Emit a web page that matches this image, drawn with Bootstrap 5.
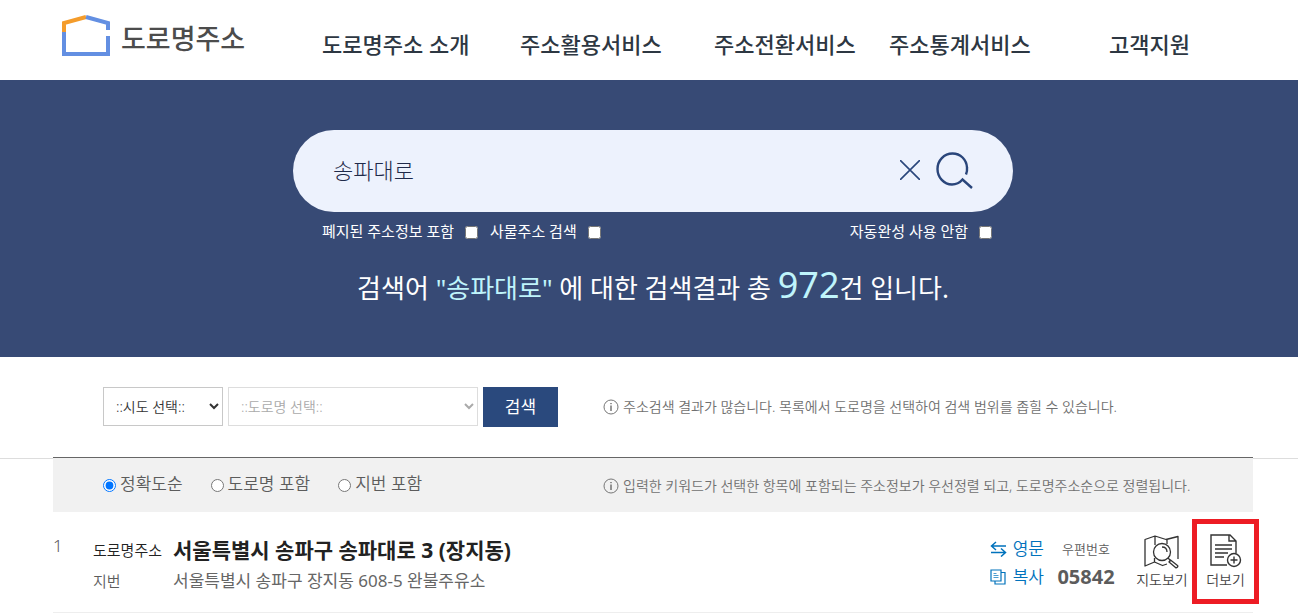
<!DOCTYPE html>
<html lang="ko">
<head>
<meta charset="utf-8">
<meta name="viewport" content="width=device-width, initial-scale=1">
<title>도로명주소</title>
<link rel="stylesheet" href="https://cdn.jsdelivr.net/npm/bootstrap@5.3.0/dist/css/bootstrap.min.css">
<style>
body{font-family:"Noto Sans","Noto Sans CJK KR",sans-serif;color:#5c5c5c;background:#fff;line-height:24px;font-size:17px;font-weight:350}
a{text-decoration:none;color:inherit}
.wrap{padding-left:53px;padding-right:45px}
.site-head{height:80px}
.brand{width:269px;padding-left:9px;color:#4c4c4c;font-size:27px;font-weight:500;gap:11px;padding-bottom:3px}
.brand svg{margin-top:-6px}
.gnb{display:grid;grid-template-columns:198fr 194fr 175fr 220fr 144fr;font-size:22px;font-weight:500;color:#2d3742;padding-top:8px}
.hero{background:#374a75;color:#fff;height:277px;padding-top:50px}
.search-area{width:100%;max-width:720px}
.search-box{background:#edf2fd;height:82px;border-radius:41px;padding:0 40px 2px 38px}
.search-box input{background:none;border:0;outline:0;font-size:22px;color:#1f2a4a;min-width:0;font-weight:300}
.search-box button{background:none;border:0;padding:0;line-height:0}
.checks{font-size:15px;padding:7px 21px 0 29px;font-weight:400}
.checks label{gap:11px}
input[type=checkbox],input[type=radio]{width:13px;height:13px;margin:3px 0 0}
.summary{font-size:26px;line-height:48px;margin:18px 0 0;font-weight:400}
.summary em{font-style:normal;color:#bff4fb}
.summary .total{font-size:36px}
.filter{height:101px;padding-top:30px}
.filter select{height:39px;border:1px solid #c8c8c8;background:#fff;font-size:14px;color:#333;padding:0 8px;width:120px;font-weight:350}
.filter select.road{width:250px}
.filter select:disabled{color:#aaa;border-color:#ddd;opacity:1}
.filter button{width:75px;height:40px;background:#2a497d;color:#fff;border:0;font-size:17px}
.half{width:550px;padding-left:50px}
.picks{gap:5px}
.picks>*{flex-shrink:0}
.hint{font-size:14px;color:#707070;gap:4px}
.filter-line{border-bottom:1px solid #ddd}
.sort{background:#f1f1f1;height:55px;border-top:1px solid #666;margin-top:-2px;position:relative;padding-bottom:2px}
.sort .half{gap:28px}
.sort label{gap:4px}
.result{height:101px;border-bottom:1px solid #eee;padding-top:24px}
.num{width:40px;line-height:20px}
.addr{display:grid;grid-template-columns:80px 1fr;row-gap:7px;margin-top:2px}
.addr dt{font-size:15px;font-weight:350}
.addr dd{margin:0}
.addr dt.road-name{color:#222}
.addr dd.road-name{font-size:21px;font-weight:700;color:#222}
.addr .lot{font-weight:400;color:#666}
.result-links{margin-top:-1px}
.link-blue{color:#0072bc;gap:6px;line-height:28px}
.zip{width:76px;margin:-1px 0 0 4px;font-size:13px;line-height:28px}
.zip strong{font-size:20px;display:block}
.tool{font-size:14px;line-height:20px;color:#444}
.tool svg{display:block;margin:0 auto 2px}
.tool-map{width:58px;margin:-1px 0 0 9px}
.tool-map svg{margin-bottom:1px}
.tool-more{width:67px;height:85px;border:5px solid #ed1c24;padding-top:10px;margin:-17px -6px 0 1px}
</style>
</head>
<body>
<header class="site-head wrap d-flex align-items-center">
<a href="#" class="brand d-flex align-items-center flex-shrink-0">
<svg width="48" height="41" viewBox="0 0 48 41" fill="none" stroke-width="4"><path d="M2 17V8L24 2" stroke="#f49c2b"/><path d="M24 2l22 6v7M46 21v18H2V17" stroke="#638fe2"/></svg>
<span>도로명주소</span></a>
<nav class="gnb flex-grow-1 text-nowrap"><a href="#">도로명주소 소개</a><a href="#">주소활용서비스</a><a href="#">주소전환서비스</a><a href="#">주소통계서비스</a><a href="#">고객지원</a></nav>
</header>
<main>
<section class="hero"><div class="wrap d-flex flex-column align-items-center">
<form class="search-area">
<div class="search-box d-flex align-items-center">
<input type="text" class="flex-grow-1" value="송파대로" aria-label="주소 검색">
<button type="button" class="me-3" aria-label="지우기"><svg width="20" height="20" viewBox="0 0 20 20" stroke="#2a467b" stroke-width="1.6"><path d="M0 0l20 20M20 0L0 20"/></svg></button>
<button type="submit" aria-label="검색"><svg width="37" height="37" viewBox="0 0 37 37" fill="none" stroke="#2a467b" stroke-width="2.4"><path d="M30 22.500C31 20 31.300 18 31 15.500C30.500 7.500 24.500 1.500 16.500 1.500C8 1.500 1.500 8.500 1.500 17S8 32.500 16 32.500C20 32.500 23.500 31 26.500 27.500L36 36"/></svg></button>
</div>
<div class="checks d-flex">
<label class="d-flex align-items-center">폐지된 주소정보 포함 <input type="checkbox"></label>
<label class="d-flex align-items-center ms-2 ps-1">사물주소 검색 <input type="checkbox"></label>
<label class="d-flex align-items-center ms-auto">자동완성 사용 안함 <input type="checkbox"></label>
</div>
</form>
<p class="summary text-nowrap">검색어 <em>"송파대로"</em> 에 대한 검색결과 총 <em class="total">972</em>건 입니다.</p>
</div></section>
<section class="filter-line"><form class="filter wrap d-flex align-items-start">
<div class="half picks d-flex flex-shrink-0">
<select aria-label="시도"><option>::시도 선택::</option></select>
<select class="road" aria-label="도로명" disabled><option>::도로명 선택::</option></select>
<button type="submit">검색</button></div>
<div class="hint d-flex align-items-center pt-2"><svg width="16" height="16" viewBox="0 0 16 16" fill="none" stroke="#777"><circle cx="8" cy="8" r="7"/><path d="M8 6.500V12M8 4v1.200" stroke="#333"/></svg>주소검색 결과가 많습니다. 목록에서 도로명을 선택하여 검색 범위를 좁힐 수 있습니다.</div>
</form></section>
<section class="wrap">
<div class="sort d-flex align-items-center">
<div class="half d-flex flex-shrink-0">
<label class="d-flex align-items-center"><input type="radio" name="order" checked>정확도순</label>
<label class="d-flex align-items-center"><input type="radio" name="order">도로명 포함</label>
<label class="d-flex align-items-center"><input type="radio" name="order">지번 포함</label></div>
<div class="hint d-flex align-items-center pt-1"><svg width="16" height="16" viewBox="0 0 16 16" fill="none" stroke="#777"><circle cx="8" cy="8" r="7"/><path d="M8 6.500V12M8 4v1.200" stroke="#333"/></svg>입력한 키워드가 선택한 항목에 포함되는 주소정보가 우선정렬 되고, 도로명주소순으로 정렬됩니다.</div>
</div>
<article class="result d-flex align-items-start text-nowrap">
<div class="num">1</div>
<dl class="addr flex-grow-1 mb-0"><dt class="road-name">도로명주소</dt><dd class="road-name">서울특별시 송파구 송파대로 3 (장지동)</dd><dt>지번</dt><dd class="lot">서울특별시 송파구 장지동 608-5 완불주유소</dd></dl>
<div class="result-links"><a href="#" class="link-blue d-flex align-items-center"><svg width="17" height="16" viewBox="0 0 17 16" fill="none" stroke="currentColor" stroke-width="1.500"><path d="M6 1L1.500 5 6 9M1.500 5H16M11 7.500L15.500 11.500 11 15.500M15.500 11.500H1"/></svg>영문</a>
<a href="#" class="link-blue d-flex align-items-center"><svg width="17" height="16" viewBox="0 0 17 16" fill="none" stroke="currentColor" stroke-width="1.200"><path d="M1 1h10v11H1zM11 3.500h4V15H5v-3"/><path d="M3.500 4.500h3M3.500 6.500h5M3.500 8.500h5" stroke-width=".7"/></svg>복사</a></div>
<div class="zip text-center">우편번호<strong>05842</strong></div>
<a href="#" class="tool tool-map text-center"><svg width="36" height="34" viewBox="0 0 36 34" fill="none" stroke="#333" stroke-width="1.300" stroke-linejoin="round"><path d="M10.500 27L1 31V4.500L11 1l11 3.500L34 1.500V24M11 1v9M23 4.500V9M10.500 27V23M1 31l9.500-4 8 3.500L23 29"/><circle cx="18" cy="17" r="8.500"/><path d="M18 12c3 0 5 2 5 5M24 23l3 3M26.500 25l7 5.500c1 1-1 3-2 2L25 27z"/></svg>지도보기</a>
<a href="#" class="tool tool-more text-center"><svg width="32" height="34" viewBox="0 0 32 34" fill="none" stroke="#333" stroke-width="1.400"><path d="M17 31H1V1h19l6 6v12M19 1v6h7M5 11h17M5 15h17M5 19h13M5 23h9"/><circle cx="24" cy="26" r="6.500"/><path d="M24 22.500v7M20.500 26h7"/></svg>더보기</a>
</article>
</section>
</main>
<script src="https://cdn.jsdelivr.net/npm/bootstrap@5.3.0/dist/js/bootstrap.bundle.min.js"></script>
</body>
</html>
